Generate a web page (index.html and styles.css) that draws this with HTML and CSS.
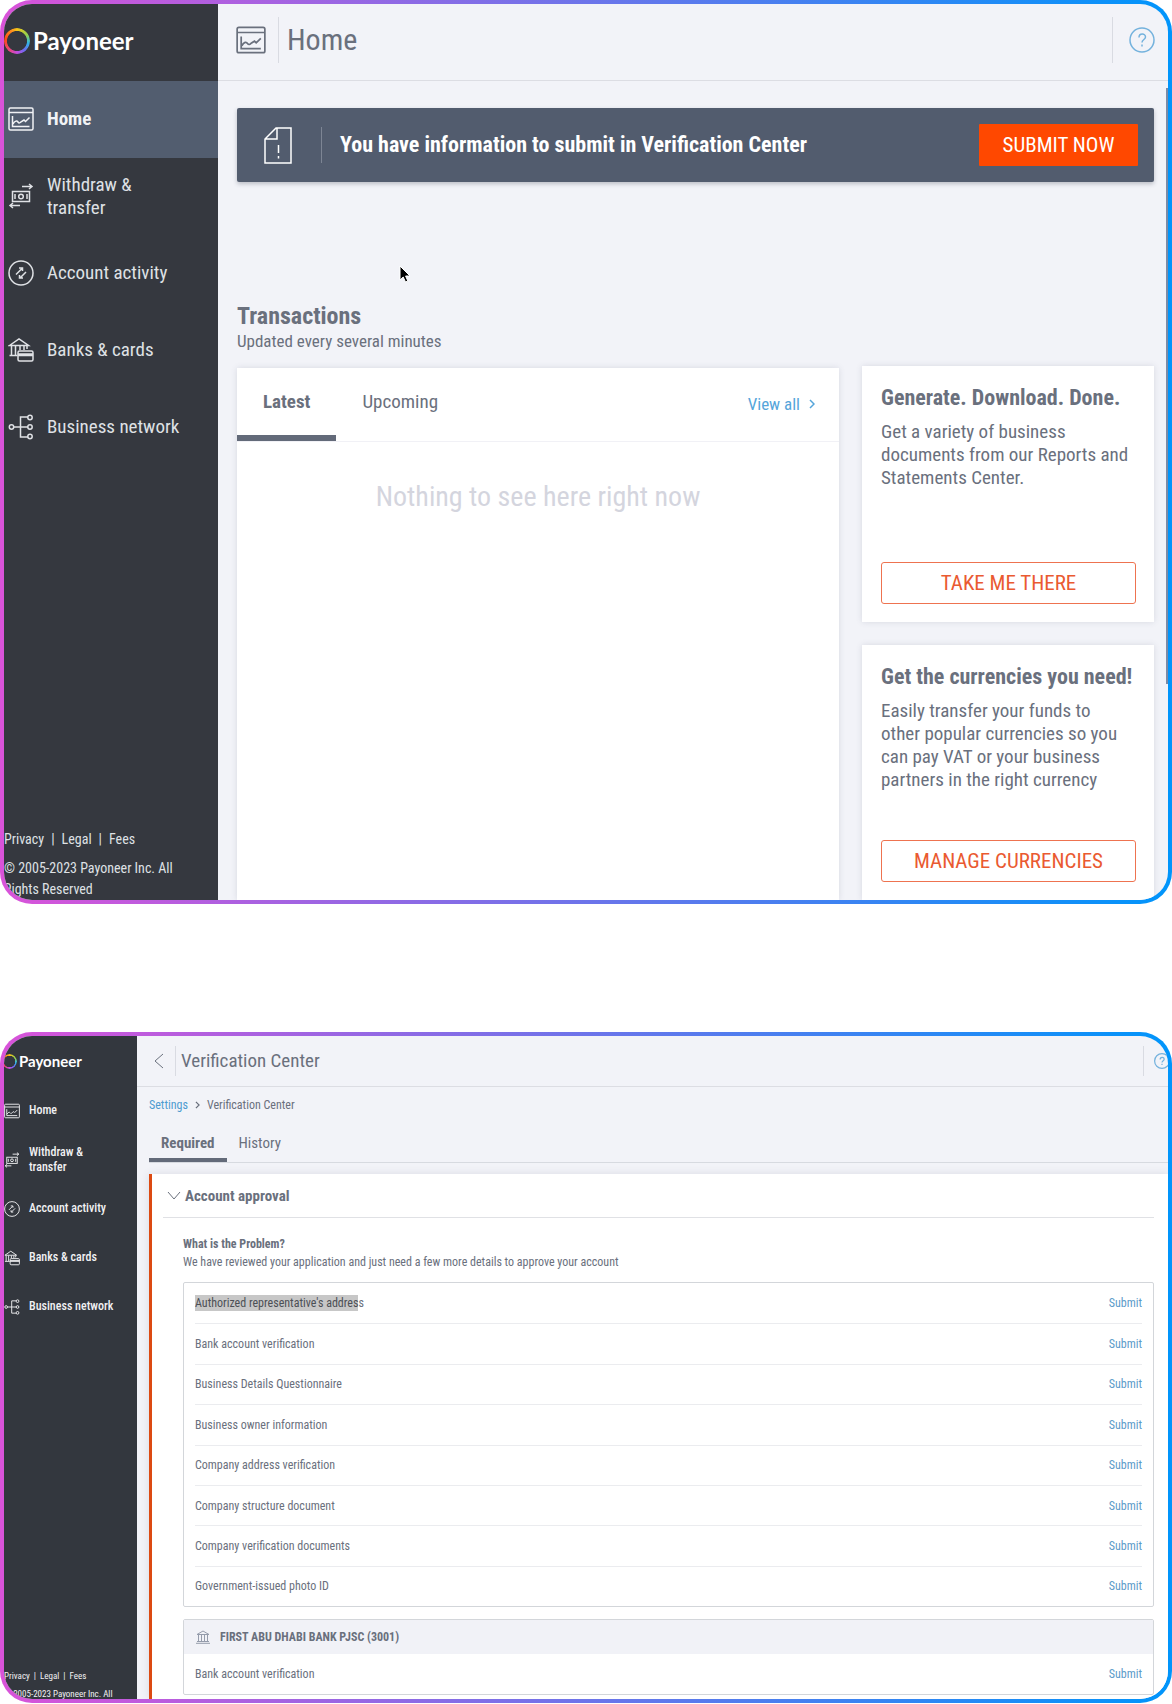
FILE: index.html
```html
<!DOCTYPE html>
<html lang="en">
<head>
<meta charset="utf-8">
<meta name="viewport" content="width=device-width, initial-scale=1">
<title>Payoneer</title>
<link rel="stylesheet" href="styles.css">
</head>
<body>
<svg class="sprite" aria-hidden="true">
  <symbol id="i-home" viewBox="0 0 26 24"><rect x="1" y="1" width="24" height="22" rx="1.5"/><path d="M1 5.500h24M4.500 9v10.500h17M5 17c2-3.500 4-3.500 5-2s2 1 3.500-.5l2.500-1.500 1.500 1.500 4-4"/></symbol>
  <symbol id="i-transfer" viewBox="0 0 26 26"><rect x="4.500" y="8.500" width="17" height="10"/><circle cx="13" cy="13.500" r="2.300"/><path d="M7 11v5M19 11v5M14 3.500h10M21 1l3 2.500-3 2.500M12 22.500h-10M5 20l-3 2.500 3 2.500"/></symbol>
  <symbol id="i-activity" viewBox="0 0 26 26"><circle cx="13" cy="13" r="12"/><path d="M8 14.500l6-6M12 18l6-6M11 8h3.500v3M15 18h-3.500v-3"/></symbol>
  <symbol id="i-banks" viewBox="0 0 26 26"><path d="M1.500 8.500L11 2l9.500 6.500zM3.500 9v9M7.500 9v9M12 9v4M16 9v4M19 9v3M1.500 18.500h8"/><rect x="10" y="14" width="15" height="10" rx="1.500"/><path d="M10 17h15M10 18.500h15"/></symbol>
  <symbol id="i-network" viewBox="0 0 26 26"><path d="M6 13h14M20 3h-7.500v20h7.500"/><circle cx="3.500" cy="13" r="2.200"/><circle cx="22" cy="3.500" r="2.200"/><circle cx="22" cy="13" r="2.200"/><circle cx="22" cy="22.500" r="2.200"/></symbol>
  <symbol id="i-help" viewBox="0 0 26 26"><circle cx="13" cy="13" r="12"/><path d="M10 10.500c0-4.500 6.500-4.500 6.500-.5 0 2.500-3.500 2.500-3.500 5.500M13 17.500v2"/></symbol>
  <symbol id="i-document" viewBox="0 0 28 37"><path d="M12 1h15v35H1V12zM13 1.500V12H1.500M14.500 18v8M14.500 29v2.500"/></symbol>
  <symbol id="i-bank" viewBox="0 0 14 14"><path d="M1 4.500L7 1l6 3.500zM2.500 5v6M5.500 5v6M8.500 5v6M11.500 5v6M1 11.500h12M0 13.300h14"/></symbol>
</svg>

<main class="gallery">
  <section class="frame" aria-label="Home">
    <div class="screen screen-home">
      <aside class="sidebar">
        <a class="logo" href="#"><span class="ring"></span>Payoneer</a>
        <nav class="menu">
          <a class="item active" href="#"><svg class="icon"><use href="#i-home"/></svg><span>Home</span></a>
          <a class="item" href="#"><svg class="icon"><use href="#i-transfer"/></svg><span>Withdraw &amp;<br>transfer</span></a>
          <a class="item" href="#"><svg class="icon"><use href="#i-activity"/></svg><span>Account activity</span></a>
          <a class="item" href="#"><svg class="icon"><use href="#i-banks"/></svg><span>Banks &amp; cards</span></a>
          <a class="item" href="#"><svg class="icon"><use href="#i-network"/></svg><span>Business network</span></a>
        </nav>
        <footer class="legal">
          <p class="legal-links"><a href="#">Privacy</a><span>|</span><a href="#">Legal</a><span>|</span><a href="#">Fees</a></p>
          <p>© 2005-2023 Payoneer Inc. All<br>Rights Reserved</p>
        </footer>
      </aside>
      <div class="page">
        <header class="topbar">
          <svg class="icon title-icon"><use href="#i-home"/></svg>
          <h1 class="title">Home</h1>
          <a class="help" href="#" aria-label="Help"><svg class="icon"><use href="#i-help"/></svg></a>
        </header>
        <div class="home-body">
          <div class="banner">
            <svg class="icon banner-icon"><use href="#i-document"/></svg>
            <p class="banner-text">You have information to submit in Verification Center</p>
            <button class="button primary" type="button">SUBMIT NOW</button>
          </div>
          <div class="columns">
            <section class="transactions">
              <h2 class="section-title">Transactions</h2>
              <p class="section-note">Updated every several minutes</p>
              <div class="card transactions-card">
                <div class="tabs">
                  <button class="tab selected" type="button">Latest</button>
                  <button class="tab" type="button">Upcoming</button>
                  <a class="view-all" href="#">View all<svg class="icon chevron" viewBox="0 0 6 10"><path d="M1 1l4 4-4 4"/></svg></a>
                </div>
                <p class="empty">Nothing to see here right now</p>
              </div>
            </section>
            <aside class="promos">
              <article class="card promo">
                <h3 class="promo-title">Generate. Download. Done.</h3>
                <p class="promo-text">Get a variety of business<br>documents from our Reports and<br>Statements Center.</p>
                <button class="button outline" type="button">TAKE ME THERE</button>
              </article>
              <article class="card promo">
                <h3 class="promo-title">Get the currencies you need!</h3>
                <p class="promo-text">Easily transfer your funds to<br>other popular currencies so you<br>can pay VAT or your business<br>partners in the right currency</p>
                <button class="button outline" type="button">MANAGE CURRENCIES</button>
              </article>
            </aside>
          </div>
        </div>
        <span class="scroll-thumb"></span>
      </div>
      <svg class="pointer" viewBox="0 0 12 18"><path d="M1 1v14l3.200-3 2.300 5 2.300-1-2.200-5H11z"/></svg>
    </div>
  </section>

  <section class="frame" aria-label="Verification Center">
    <div class="screen screen-verify">
      <aside class="sidebar">
        <a class="logo" href="#"><span class="ring"></span>Payoneer</a>
        <nav class="menu">
          <a class="item" href="#"><svg class="icon"><use href="#i-home"/></svg><span>Home</span></a>
          <a class="item" href="#"><svg class="icon"><use href="#i-transfer"/></svg><span>Withdraw &amp;<br>transfer</span></a>
          <a class="item" href="#"><svg class="icon"><use href="#i-activity"/></svg><span>Account activity</span></a>
          <a class="item" href="#"><svg class="icon"><use href="#i-banks"/></svg><span>Banks &amp; cards</span></a>
          <a class="item" href="#"><svg class="icon"><use href="#i-network"/></svg><span>Business network</span></a>
        </nav>
        <footer class="legal">
          <p class="legal-links"><a href="#">Privacy</a><span>|</span><a href="#">Legal</a><span>|</span><a href="#">Fees</a></p>
          <p>© 2005-2023 Payoneer Inc. All</p>
        </footer>
      </aside>
      <div class="page">
        <header class="topbar">
          <a class="back" href="#" aria-label="Back"><svg class="icon" viewBox="0 0 10 16"><path d="M9 1L1 8l8 7"/></svg></a>
          <h1 class="title">Verification Center</h1>
          <a class="help" href="#" aria-label="Help"><svg class="icon"><use href="#i-help"/></svg></a>
        </header>
        <div class="verify-body">
          <nav class="crumbs"><a href="#">Settings</a><svg class="icon chevron" viewBox="0 0 6 10"><path d="M1 1l4 4-4 4"/></svg><span>Verification Center</span></nav>
          <div class="tabs">
            <button class="tab selected" type="button">Required</button>
            <button class="tab" type="button">History</button>
          </div>
          <section class="approval">
            <h2 class="approval-title"><svg class="icon" viewBox="0 0 14 9"><path d="M1 1l6 7 6-7"/></svg>Account approval</h2>
            <div class="approval-body">
              <h3 class="problem">What is the Problem?</h3>
              <p class="problem-note">We have reviewed your application and just need a few more details to approve your account</p>
              <ul class="box requirements">
                <li><span><mark>Authorized representative's addres</mark>s</span><a href="#">Submit</a></li>
                <li><span>Bank account verification</span><a href="#">Submit</a></li>
                <li><span>Business Details Questionnaire</span><a href="#">Submit</a></li>
                <li><span>Business owner information</span><a href="#">Submit</a></li>
                <li><span>Company address verification</span><a href="#">Submit</a></li>
                <li><span>Company structure document</span><a href="#">Submit</a></li>
                <li><span>Company verification documents</span><a href="#">Submit</a></li>
                <li><span>Government-issued photo ID</span><a href="#">Submit</a></li>
              </ul>
              <div class="box">
                <h3 class="bank"><svg class="icon"><use href="#i-bank"/></svg>FIRST ABU DHABI BANK PJSC (3001)</h3>
                <ul class="bank-list">
                  <li><span>Bank account verification</span><a href="#">Submit</a></li>
                </ul>
              </div>
            </div>
          </section>
        </div>
      </div>
    </div>
  </section>
</main>
</body>
</html>
```
FILE: styles.css
```css
* { box-sizing: border-box; }

body {
  margin: 0;
  background: #fff;
  color: #6a707d;
  font-family: "Roboto Condensed", "Liberation Sans Narrow", Roboto, sans-serif;
}

h1, h2, h3, p, ul { margin: 0; padding: 0; font-weight: 400; }
li { list-style: none; }
a { color: inherit; text-decoration: none; }
button {
  margin: 0;
  padding: 0;
  border: 0;
  background: none;
  color: inherit;
  font: inherit;
  cursor: pointer;
}

.sprite { display: none; }
.icon { display: block; flex: none; fill: none; stroke: currentColor; stroke-width: 1.5; }

.gallery { display: flex; flex-direction: column; gap: 128px; }

/* Rounded frame with a gradient edge */
.frame {
  padding: 4px;
  border-radius: 32px;
  background: linear-gradient(90deg, #d953d9, #0095fb);
}
.screen {
  position: relative;
  display: flex;
  overflow: hidden;
  border-radius: 28px;
  background: #f2f3f8;
}
.page { position: relative; flex: 1; min-width: 0; }

/* Sidebar */
.sidebar {
  display: flex;
  flex-direction: column;
  flex: none;
  width: 214px;
  background: #35383f;
  color: #dfe1e5;
}
.logo {
  display: flex;
  align-items: center;
  gap: 3px;
  height: 77px;
  padding-bottom: 4px;
  color: #fff;
  font: 700 24px/32px Lato, sans-serif;
}
.ring {
  width: 26px;
  height: 26px;
  border-radius: 50%;
  background: conic-gradient(#f5c518, #8fd14f 60deg, #2fb5e8 100deg, #6a6cf0 140deg, #c44be0 180deg, #e8457a 220deg, #ff4a14 280deg, #ff8a1e 330deg, #f5c518);
  -webkit-mask: radial-gradient(closest-side, transparent 74%, #000 80%);
  mask: radial-gradient(closest-side, transparent 74%, #000 80%);
}
.item {
  display: flex;
  align-items: center;
  gap: 13px;
  height: 77px;
  padding: 0 0 2px 4px;
  font-size: 19px;
  line-height: 23px;
}
.item .icon { width: 26px; height: 26px; }
.item.active { background: #525d6f; color: #f1f2f5; font-weight: 700; }
.legal { margin-top: auto; font-size: 14px; line-height: 21px; }
.legal-links { display: flex; gap: 7px; margin-bottom: 8px; }

/* Top bar */
.topbar {
  display: flex;
  align-items: center;
  height: 77px;
  padding: 0 13px 4px 18px;
  border-bottom: 1px solid #dcdde3;
}
.title-icon { width: 30px; height: 28px; margin-right: 12px; }
.title {
  padding-left: 8px;
  border-left: 1px solid #d9dbe2;
  font-size: 30px;
  line-height: 46px;
}
.help {
  display: flex;
  align-items: center;
  height: 46px;
  margin-left: auto;
  padding-left: 16px;
  border-left: 1px solid #d9dbe2;
  color: #74b2dd;
}
.help .icon { width: 26px; height: 26px; }

/* Home */
.home-body { padding: 27px 14px 0 19px; }
.banner {
  display: flex;
  align-items: center;
  padding: 16px;
  padding-left: 27px;
  border-radius: 2px;
  background: #525c6e;
  box-shadow: 0 2px 4px rgba(60, 66, 84, .3);
  color: #fff;
}
.banner-icon { width: 28px; height: 37px; margin-right: 29px; }
.banner-text {
  flex: 1;
  padding-left: 18px;
  border-left: 1px solid #7d8594;
  font-size: 22px;
  font-weight: 700;
  line-height: 36px;
}
.button { display: block; height: 42px; font-size: 21px; line-height: 26px; }
.primary { width: 159px; border-radius: 1px; background: #ff4800; }
.outline { width: 100%; margin-top: auto; border: 1px solid #ee7350; border-radius: 3px; color: #ea5a31; }
.columns {
  display: grid;
  grid-template-columns: minmax(0, 1fr) 292px;
  gap: 23px;
  padding-top: 119px;
}
.transactions { display: flex; flex-direction: column; }
.section-title { font-size: 24px; font-weight: 700; line-height: 30px; }
.section-note { padding-bottom: 17px; font-size: 17px; line-height: 20px; }
.card { background: #fff; box-shadow: 0 0 6px rgba(80, 84, 110, .16); }
.transactions-card { flex: 1; }
.tabs { display: flex; }
.transactions-card .tabs { height: 74px; border-bottom: 1px solid #f1f1f6; }
.tab { border-bottom: 6px solid transparent; }
.tab.selected { border-color: #636a79; font-weight: 700; }
.transactions-card .tab { padding: 0 26px; font-size: 19px; }
.view-all {
  display: flex;
  align-items: center;
  gap: 9px;
  margin-left: auto;
  padding: 0 24px 2px 0;
  color: #55a5da;
  font-size: 17px;
}
.chevron { width: 6px; height: 10px; }
.empty {
  padding-top: 35px;
  color: #d4d5de;
  font-size: 28px;
  line-height: 40px;
  text-align: center;
}
.promos { display: grid; grid-template-rows: 256px 255px; gap: 23px; padding-top: 65px; }
.promo { display: flex; flex-direction: column; padding: 18px 18px 18px 19px; }
.promo-title { margin-bottom: 8px; font-size: 22px; font-weight: 700; line-height: 28px; white-space: nowrap; }
.promo-text { font-size: 19px; line-height: 23px; }
.scroll-thumb {
  position: absolute;
  top: 84px;
  right: 0;
  width: 2px;
  height: 596px;
  background: #7c8ba6;
}
.pointer {
  position: absolute;
  top: 261px;
  left: 395px;
  width: 12px;
  height: 18px;
  fill: #000;
  stroke: #fff;
}

/* Verification Center */
.screen-verify .sidebar { width: 133px; background: #33373e; color: #f1f1f3; }
.screen-verify .logo { gap: 2px; height: 50px; padding: 0; font-size: 15px; line-height: 20px; }
.screen-verify .ring { width: 15px; height: 15px; margin-left: -2px; }
.screen-verify .item { gap: 9px; height: 49px; padding: 0; font-size: 12px; font-weight: 500; line-height: 15px; }
.screen-verify .item .icon { width: 16px; height: 16px; }
.screen-verify .legal { font-size: 9px; font-weight: 500; line-height: 10px; }
.screen-verify .legal-links { gap: 4px; margin-bottom: 8px; }
.screen-verify .topbar { height: 51px; padding: 0 0 0 17px; }
.screen-verify .help { height: 30px; margin-right: -2px; padding-left: 10px; }
.screen-verify .help .icon { width: 16px; height: 16px; stroke-width: 2; }
.back { margin-right: 11px; }
.back .icon { width: 10px; height: 16px; stroke-width: 1; }
.screen-verify .title { padding-left: 5px; font-size: 19px; line-height: 30px; }
.verify-body { padding-left: 12px; }
.crumbs {
  display: flex;
  align-items: center;
  gap: 7px;
  height: 36px;
  font-size: 12px;
}
.crumbs a { color: #4d9bd0; }
.crumbs .chevron { width: 5px; height: 8px; }
.verify-body .tabs { height: 40px; border-bottom: 1px solid #d7dae0; }
.verify-body .tab { padding: 5px 12px 0; border-bottom-width: 4px; font-size: 15px; }
.approval {
  margin-top: 11px;
  padding: 0 14px 4px 11px;
  border-left: 3px solid #dc4a12;
  background: #fff;
  box-shadow: 0 0 8px rgba(80, 84, 110, .14);
}
.approval-title {
  display: flex;
  align-items: center;
  gap: 4px;
  height: 44px;
  padding-left: 4px;
  border-bottom: 1px solid #e0e1e5;
  font-size: 15px;
  font-weight: 700;
}
.approval-title .icon { width: 14px; height: 9px; stroke-width: 1; }
.approval-body { padding: 17px 0 0 20px; font-size: 12px; line-height: 18px; }
.problem { font-size: 12px; font-weight: 700; }
.problem-note { margin-bottom: 11px; }
.box { border: 1px solid #d3d6da; border-radius: 2px; }
.box li {
  display: flex;
  align-items: center;
  justify-content: space-between;
  margin: 0 11px;
}
.box li + li { border-top: 1px solid #ebecef; }
.box li a { color: #5c9bc9; }
.requirements { display: grid; grid-auto-rows: 1fr; min-height: 325px; margin-bottom: 12px; }
mark { padding: 1px 0; background: #c7c7c7; color: #4c4f55; }
.bank {
  display: flex;
  align-items: center;
  gap: 10px;
  height: 34px;
  padding-left: 12px;
  background: #f1f2f7;
  font-size: 12px;
  font-weight: 700;
}
.bank .icon { width: 14px; height: 14px; stroke: #959cab; stroke-width: 1; }
.bank-list li { height: 40px; }
```
